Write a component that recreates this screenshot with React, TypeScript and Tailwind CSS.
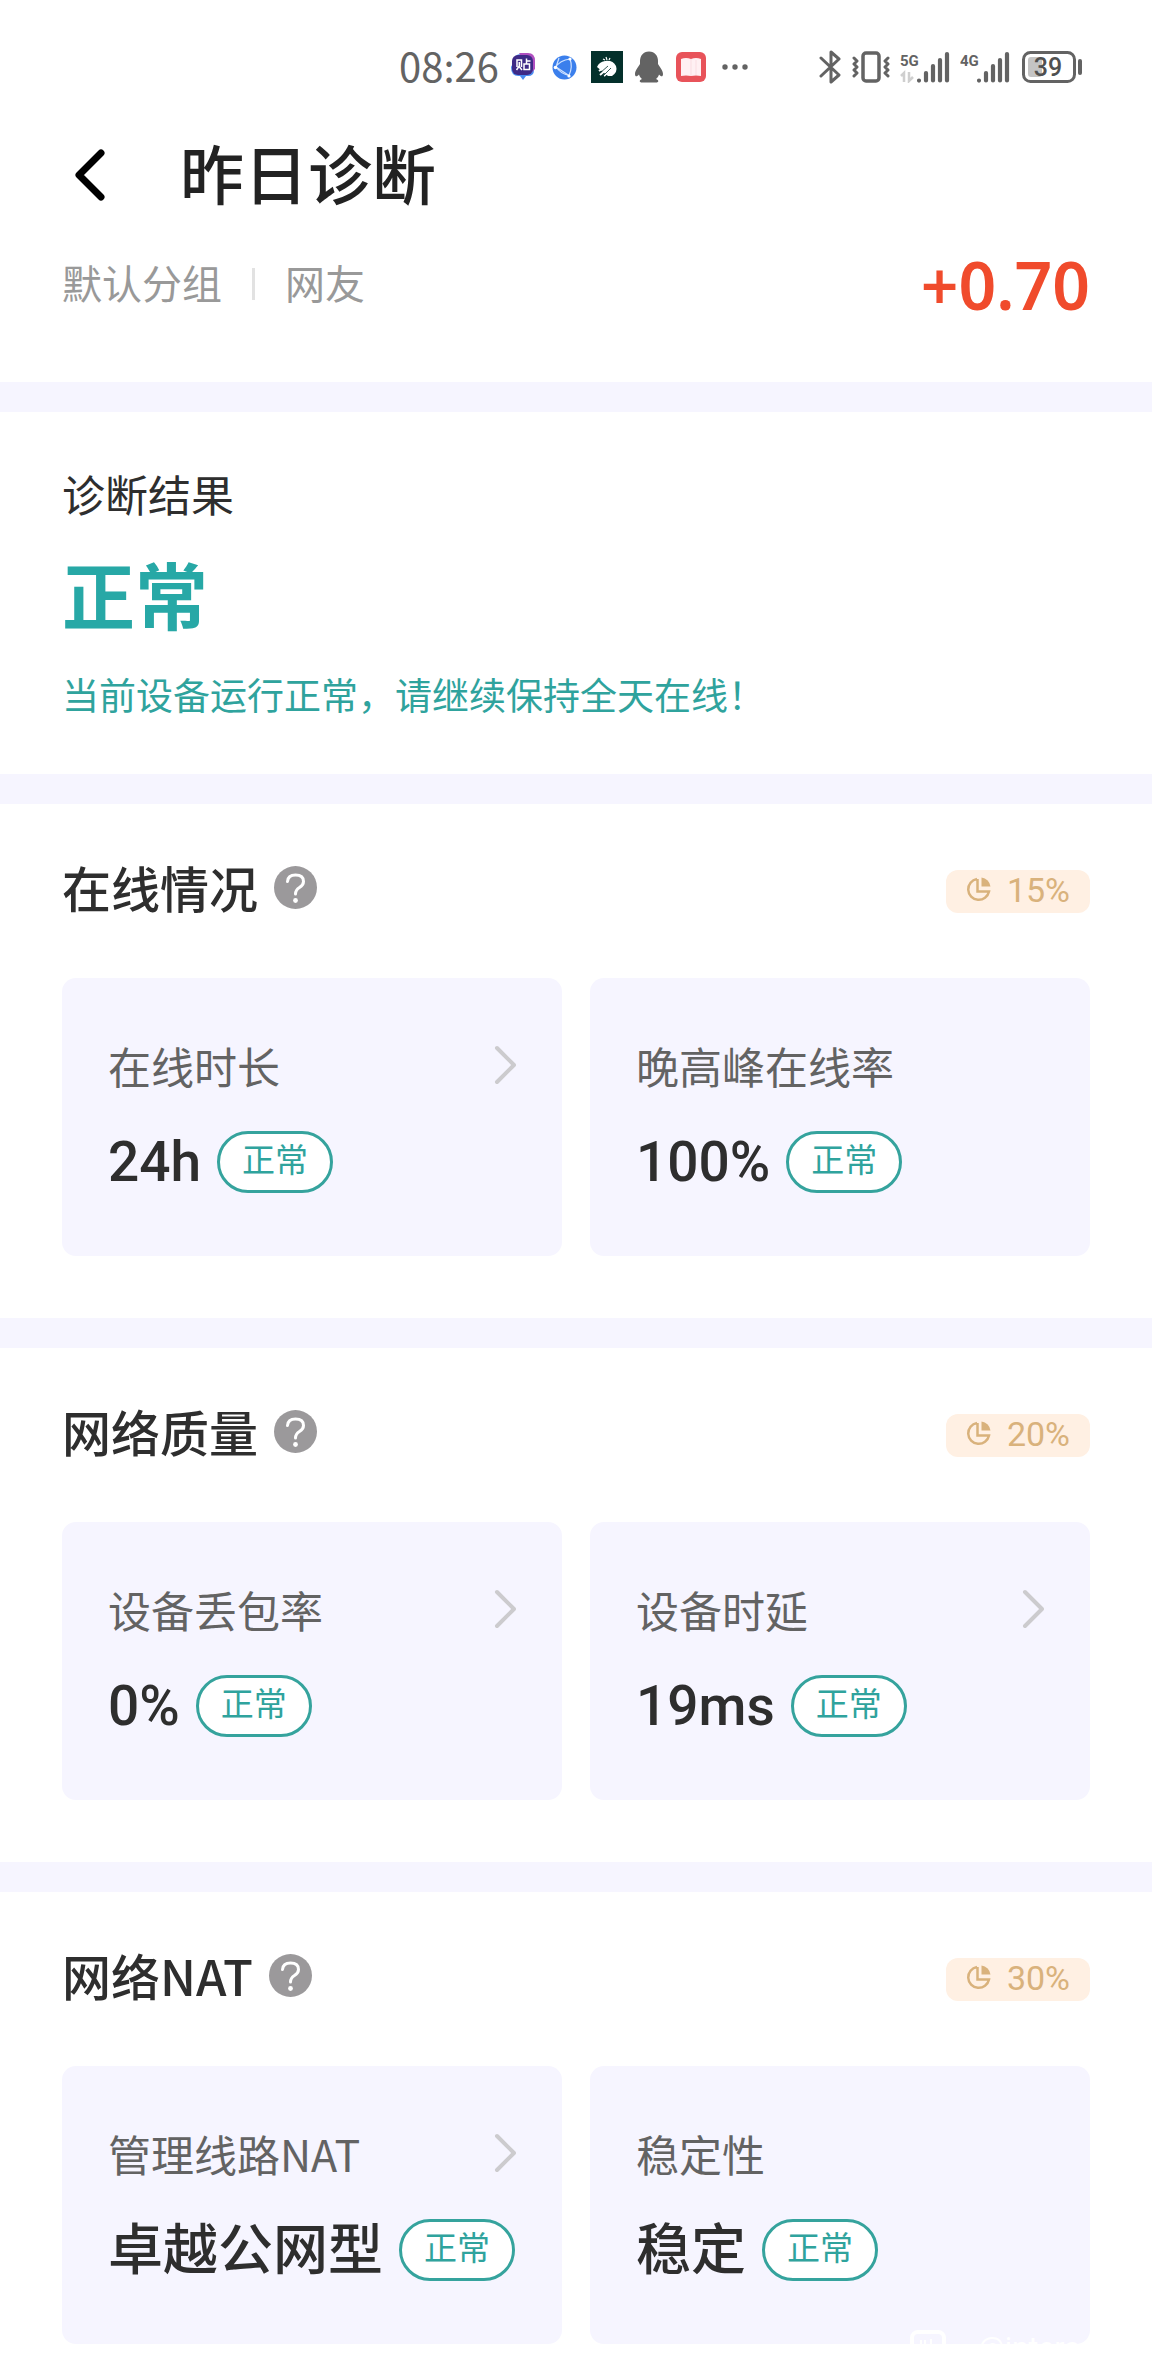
import type { ReactNode } from 'react'

interface Metric {
  label: string
  value: string
  status: string
  link?: boolean
}

interface Section {
  title: string
  weight: string
  metrics: Metric[]
}

const sections: Section[] = [
  {
    title: '在线情况',
    weight: '15%',
    metrics: [
      { label: '在线时长', value: '24h', status: '正常', link: true },
      { label: '晚高峰在线率', value: '100%', status: '正常' },
    ],
  },
  {
    title: '网络质量',
    weight: '20%',
    metrics: [
      { label: '设备丢包率', value: '0%', status: '正常', link: true },
      { label: '设备时延', value: '19ms', status: '正常', link: true },
    ],
  },
  {
    title: '网络NAT',
    weight: '30%',
    metrics: [
      { label: '管理线路NAT', value: '卓越公网型', status: '正常', link: true },
      { label: '稳定性', value: '稳定', status: '正常' },
    ],
  },
]

function AppIcons() {
  return (
    <div className="flex items-center">
      {/* Tieba */}
      <svg className="ml-3 w-6 h-7" viewBox="0 0 24 28">
        <path d="M3 8 Q3 1 10 1 H17 Q23 1 23 7 V17 Q23 23 17 23 H15 L12 27 L9 23 Q0 24 0 14 Z" fill="#4a8cf0" />
        <path d="M8 0 H17 Q24 0 24 8 V16 L20 20 Z" fill="#b04fc0" />
        <rect x="1" y="2" width="21" height="20" rx="6" fill="#3e2a86" />
        <path d="M6 14 V7 H10.500 V14 M8.300 9 V13 L5.500 17 M8.500 14 L11 17 M15.500 5.500 V11 M15.500 8 H19.500 M13 11 H18.500 V16.500 H13 Z" stroke="#fff" strokeWidth="1.500" fill="none" />
      </svg>
      {/* Browser */}
      <svg className="ml-[17px] w-[25px] h-[25px]" viewBox="0 0 25 25">
        <circle cx="12.500" cy="12.500" r="12" fill="#3b7fec" />
        <g stroke="#cfe2ff" strokeWidth="1.200" fill="none">
          <path d="M3 13 Q8 5 18 4 M4 12 Q9 19 17 20.500 M18 4 Q21 12 17 20.500 M4 12 L17 20.500 M7 3 L4 12" />
        </g>
        <g fill="#fff">
          <circle cx="3.500" cy="12.500" r="1.800" />
          <circle cx="18" cy="4" r="1.600" />
          <circle cx="17" cy="21" r="1.600" />
        </g>
      </svg>
      {/* Lion */}
      <svg className="ml-[14px] w-8 h-8" viewBox="0 0 32 32">
        <rect width="32" height="32" fill="#04302b" />
        <path d="M6 16 Q8 11 14 10 Q22 9 25 15 Q27 21 21 25 L17 25 Z" fill="#fff" />
        <path d="M15 15 L8 20 M18 16 L9 24 M21 17 L13 25" stroke="#fff" strokeWidth="2" />
        <path d="M17 15 L9 22 M20 17 L12 25" stroke="#04302b" strokeWidth="0.800" />
        <path d="M12 8 L14 9 M15 6 L16 9 M19 7 L18 9" stroke="#fff" strokeWidth="1.200" />
      </svg>
      {/* QQ */}
      <svg className="ml-3 w-7 h-8" viewBox="0 0 28 32">
        <path d="M14 0.500 C8 0.500 5 5 5 10 V13 C3 16 0 20 0 23 C0 26 2 26 4 23.500 C4.500 26 6 27 7 28 C4 29 4 31.500 7 31.500 H21 C24 31.500 24 29 21 28 C22 27 23.500 26 24 23.500 C26 26 28 26 28 23 C28 20 25 16 23 13 V10 C23 5 20 0.500 14 0.500 Z" fill="#636363" />
      </svg>
      {/* Reader */}
      <svg className="ml-[13px] w-[30px] h-[30px]" viewBox="0 0 30 30">
        <rect width="30" height="30" rx="6" fill="#e8535a" />
        <path d="M5 7 Q10 5 15 7 Q20 5 25 7 V24 Q20 23 15 24 Q10 23 5 24 Z" fill="#fff0f3" />
        <path d="M15 7 V24 M20 8 V23" stroke="#f9dde2" strokeWidth="1" />
      </svg>
      <svg className="ml-4 w-[26px] h-2" viewBox="0 0 26 8" fill="#636363">
        <circle cx="3" cy="4" r="2.700" />
        <circle cx="13" cy="4" r="2.700" />
        <circle cx="23" cy="4" r="2.700" />
      </svg>
    </div>
  )
}

function Signal({ label, data }: { label: string; data?: boolean }) {
  return (
    <svg className="w-[50px] h-8" viewBox="0 0 50 32">
      <text x="0" y="15" fontSize="15" fontWeight="700" fill="#636363" className="font-['Roboto',sans-serif]">
        {label}
      </text>
      {data && <path d="M4 31 V22 L1 25 M9 21 V30 L13 26" stroke="#cfcfcf" strokeWidth="2.500" fill="none" />}
      <path
        d="M19 29.500 V29.600 M26 29.500 V22 M33 29.500 V15 M40 29.500 V9 M47 29.500 V3"
        stroke="#636363" strokeWidth="4.200" strokeLinecap="round"
      />
    </svg>
  )
}

function StatusBar() {
  return (
    <div className="flex items-center h-[134px] pr-[69px] pl-[399px] text-[#636363]">
      <span className="text-[40px] leading-[48px] -mt-1">08:26</span>
      <AppIcons />
      <div className="flex items-center ml-auto">
        <svg className="w-[22px] h-[34px]" viewBox="0 0 22 34" fill="none" stroke="#636363" strokeWidth="3" strokeLinecap="round" strokeLinejoin="round">
          <path d="M2 8 L20 25 L12 32 V2 L20 9 L2 26" />
        </svg>
        <svg className="ml-[11px] w-[38px] h-8" viewBox="0 0 38 32" fill="none" stroke="#636363" strokeLinejoin="round" strokeLinecap="round">
          <rect x="11" y="2" width="16" height="28" rx="3" strokeWidth="3.500" />
          <path d="M2 7 L5 10 L2 13 L5 16 L2 19 L5 22 L2 25 M36 7 L33 10 L36 13 L33 16 L36 19 L33 22 L36 25" strokeWidth="3" />
        </svg>
        <div className="flex gap-[10px] ml-[10px]">
          <Signal label="5G" data />
          <Signal label="4G" />
        </div>
        <svg className="ml-3 w-[61px] h-8" viewBox="0 0 61 32">
          <rect x="1.500" y="1.500" width="51" height="29" rx="7" fill="none" stroke="#636363" strokeWidth="3" />
          <rect x="6" y="6" width="14" height="20" rx="3" fill="#c4c4c4" />
          <rect x="56" y="8" width="4" height="16" rx="2" fill="#636363" />
          <text x="26" y="25" fontSize="25" fontWeight="500" textAnchor="middle" fill="#505050" className="font-['Roboto',sans-serif]">39</text>
        </svg>
      </div>
    </div>
  )
}

function Chevron() {
  return (
    <svg className="w-[22px] h-10" viewBox="0 0 22 40" fill="none" stroke="#cccbce" strokeWidth="4" strokeLinecap="round" strokeLinejoin="round">
      <path d="M3 3 L20 20 L3 37" />
    </svg>
  )
}

function MetricCard({ label, value, status, link }: Metric) {
  const body: ReactNode = (
    <>
      <div className="flex items-center justify-between h-16">
        <span className="text-[43px] leading-[64px] text-[#636363]">{label}</span>
        {link && <Chevron />}
      </div>
      <div className="flex items-center gap-4 mt-[34px]">
        <span className="font-['Roboto','Noto_Sans_CJK_SC',sans-serif] text-[55px] leading-[62px] font-medium text-[#2e2e2e] whitespace-nowrap">
          {value}
        </span>
        <span className="rounded-full border-3 border-[#35a39d] bg-white px-[22px] pb-2 text-[33px] leading-[48px] text-[#2fa39d] whitespace-nowrap">
          {status}
        </span>
      </div>
    </>
  )
  const cls = 'block w-full rounded-[14px] bg-[#f6f5ff] px-[46px] pt-[55px] pb-[63px] text-left'
  return link ? <button className={cls}>{body}</button> : <div className={cls}>{body}</div>
}

function DiagnosisSection({ title, weight, metrics }: Section) {
  return (
    <section className="border-t-30 border-[#f6f5ff] px-[62px] pt-[58px] pb-[62px] last:pb-8">
      <div className="flex items-start justify-between h-[60px]">
        <div className="flex items-center gap-4">
          <h2 className="text-[49px] leading-[50px] font-medium text-[#2e2e2e]">{title}</h2>
          <button aria-label={`${title}说明`}>
            <svg className="w-[43px] h-[43px]" viewBox="0 0 43 43">
              <circle cx="21.500" cy="21.500" r="21.500" fill="#9b999b" />
              <path d="M13.500 15.500 Q14 9 21.500 9 Q29.500 9 29.500 15.500 Q29.500 19 25.500 21.500 Q21.500 24 21.500 28" fill="none" stroke="#fff" strokeWidth="3" strokeLinecap="round" />
              <circle cx="21.500" cy="34.500" r="2.400" fill="#fff" />
            </svg>
          </button>
        </div>
        <div className="flex items-center gap-4 h-[43px] mt-2 px-5 pb-1 rounded-[12px] bg-[#fff0e3] text-[#d9b27c]">
          <svg className="w-[25px] h-[25px]" viewBox="0 0 25 25" fill="none" stroke="currentColor" strokeWidth="2.500">
            <path d="M11 2 A10.500 10.500 0 1 0 23 14.500 H11.500 V2" />
            <path d="M15.500 0.500 A10 10 0 0 1 24.500 9.500 H15.500 Z" fill="currentColor" stroke="none" />
          </svg>
          <span className="font-['Roboto',sans-serif] text-[34px] leading-[34px]">{weight}</span>
        </div>
      </div>
      <div className="grid grid-cols-2 gap-7 mt-14">
        {metrics.map(m => (
          <MetricCard key={m.label} {...m} />
        ))}
      </div>
    </section>
  )
}

function Watermark() {
  return (
    <div className="absolute bottom-[10px] right-[55px] flex items-center gap-8 text-white">
      <svg className="w-9 h-9" viewBox="0 0 36 36" fill="none" stroke="currentColor">
        <rect x="2" y="2" width="32" height="32" rx="6" strokeWidth="4" />
        <path d="M11 10 V20 M15 10 V20 M21 9 V22 H27" strokeWidth="2" />
      </svg>
      <span className="font-['Roboto',sans-serif] text-[30px] leading-[36px]">@interag</span>
    </div>
  )
}

export default function App() {
  return (
    <div className="relative min-h-screen bg-white font-['Noto_Sans_CJK_SC',sans-serif]">
      <StatusBar />

      {/* Header */}
      <header className="px-[62px] pb-16">
        <div className="flex items-center h-[82px]">
          <button aria-label="返回" className="ml-3">
            <svg className="w-8 h-[54px]" viewBox="0 0 32 54" fill="none" stroke="#000" strokeWidth="7" strokeLinecap="round" strokeLinejoin="round">
              <path d="M27 5 L5 27 L27 49" />
            </svg>
          </button>
          <h1 className="ml-[74px] -mt-2 text-[64px] leading-[82px] font-medium text-[#222]">昨日诊断</h1>
        </div>
        <div className="flex items-center mt-[34px] h-[68px]">
          <span className="text-[40px] leading-[60px] -mt-1 text-[#999]">默认分组</span>
          <span className="w-[3px] h-8 mx-[30px] bg-[#e2e2e2]" />
          <span className="text-[40px] leading-[60px] -mt-1 text-[#999]">网友</span>
          <span className="ml-auto font-['Noto_Sans',sans-serif] text-[66px] leading-[68px] font-semibold text-[#f04b2c]">+0.70</span>
        </div>
      </header>

      {/* Result */}
      <section className="border-t-30 border-[#f6f5ff] px-[62px] pt-[51px] pb-[55px]">
        <h2 className="text-[43px] leading-[60px] text-[#2e2e2e]">诊断结果</h2>
        <p className="mt-[27px] text-[73px] leading-[84px] font-bold text-[#27a8a6]">正常</p>
        <p className="mt-[35px] text-[37px] leading-[50px] text-[#2fa39d]">当前设备运行正常，请继续保持全天在线！</p>
      </section>

      <main>
        {sections.map(s => (
          <DiagnosisSection key={s.title} {...s} />
        ))}
      </main>

      <Watermark />
    </div>
  )
}
